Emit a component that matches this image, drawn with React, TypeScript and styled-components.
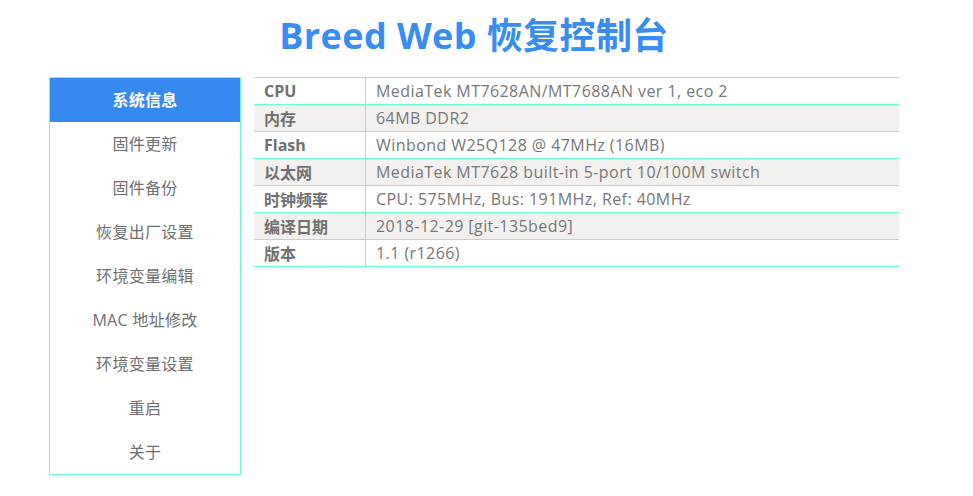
import React from "react";
import styled, { createGlobalStyle } from "styled-components";

const Global = createGlobalStyle`
  html, body { margin: 0; padding: 0; background: #fff; }
  body { font-family: "Open Sans", "Noto Sans CJK SC", sans-serif; color: #666; }
`;

const Page = styled.div`
  width: 850px;
  margin-left: 49px;
`;

const Title = styled.h1`
  margin: 0;
  height: 77px;
  line-height: 72px;
  text-align: center;
  font-size: 36px;
  font-weight: 700;
  letter-spacing: 0.4px;
  color: #3a8df0;
  font-family: "Open Sans", "Noto Sans CJK SC", sans-serif;
`;

const Main = styled.div`
  display: flex;
  align-items: flex-start;
  gap: 13px;
`;

const Sidebar = styled.nav`
  width: 190px;
  border: 1px solid #66ffcc;
  display: flex;
  flex-direction: column;
`;

const NavItem = styled.div<{ $active?: boolean }>`
  height: 44px;
  line-height: 44px;
  text-align: center;
  font-size: 16px;
  letter-spacing: 0.3px;
  color: ${(p) => (p.$active ? "#fff" : "#707070")};
  background: ${(p) => (p.$active ? "#3689ef" : "transparent")};
  font-weight: ${(p) => (p.$active ? 700 : 400)};
`;

const Table = styled.table`
  flex: 1;
  border-collapse: collapse;
  border-top: 1px solid #66ffcc;
  font-size: 16px;
`;

const Row = styled.tr<{ $alt?: boolean }>`
  background: ${(p) => (p.$alt ? "#f3f1ef" : "#fff")};
  border-bottom: 1px solid #66ffcc;
`;

const Th = styled.th`
  width: 91px;
  height: 26px;
  padding: 0 10px;
  text-align: left;
  font-weight: 700;
  color: #707070;
  border-right: 1px solid #66ffcc;
`;

const Td = styled.td`
  height: 26px;
  padding: 0 10px;
  color: #777;
  letter-spacing: 0.43px;
`;

const nav = [
  "系统信息",
  "固件更新",
  "固件备份",
  "恢复出厂设置",
  "环境变量编辑",
  "MAC 地址修改",
  "环境变量设置",
  "重启",
  "关于",
];

const rows: [string, string][] = [
  ["CPU", "MediaTek MT7628AN/MT7688AN ver 1, eco 2"],
  ["内存", "64MB DDR2"],
  ["Flash", "Winbond W25Q128 @ 47MHz (16MB)"],
  ["以太网", "MediaTek MT7628 built-in 5-port 10/100M switch"],
  ["时钟频率", "CPU: 575MHz, Bus: 191MHz, Ref: 40MHz"],
  ["编译日期", "2018-12-29 [git-135bed9]"],
  ["版本", "1.1 (r1266)"],
];

export default function App() {
  return (
    <>
      <Global />
      <Page>
        <Title>Breed Web 恢复控制台</Title>
        <Main>
          <Sidebar>
            {nav.map((n, i) => (
              <NavItem key={n} $active={i === 0}>
                {n}
              </NavItem>
            ))}
          </Sidebar>
          <Table>
            <tbody>
              {rows.map(([k, v], i) => (
                <Row key={k} $alt={i % 2 === 1}>
                  <Th>{k}</Th>
                  <Td>{v}</Td>
                </Row>
              ))}
            </tbody>
          </Table>
        </Main>
      </Page>
    </>
  );
}
